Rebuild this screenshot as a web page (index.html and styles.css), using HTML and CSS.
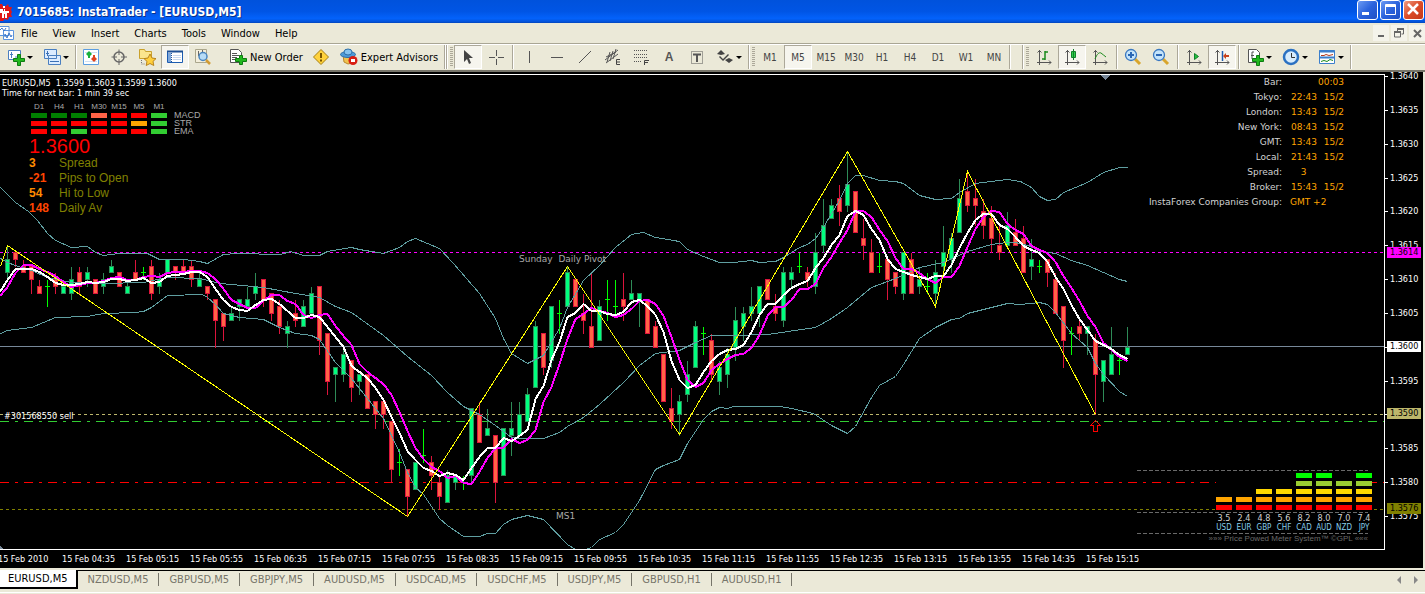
FILE: index.html
```html
<!DOCTYPE html>
<html lang="en">
<head>
<meta charset="utf-8">
<title>7015685: InstaTrader - [EURUSD,M5]</title>
<link rel="stylesheet" href="styles.css">
</head>
<body>
<div class="app">
  <header class="titlebar">
    <svg class="logo" width="12" height="18" viewBox="0 0 12 18"><path fill="#e01818" d="M0 1h2l1 2h3l2-2 1 3 3 0-1 3 1 2-1 2 1 3-3 0-1 3-3-1-2 2H0z"/><path fill="#fff" d="M0 6h3v2h1V6h1v2h4v2H7v5H5v-4H4v4H2v-5H0zM3 3h2v2H3z"/></svg>
    <h1 class="title">7015685: InstaTrader - [EURUSD,M5]</h1>
    <div class="window-buttons">
      <button class="win" aria-label="Minimize"><svg width="20" height="20"><path fill="#fff" d="M5 12h7v3H5z"/></svg></button>
      <button class="win" aria-label="Maximize"><svg width="20" height="20"><path fill="none" stroke="#fff" d="M5.500 4.500h10v10h-10zM5 5.500h11M5 6.500h11"/></svg></button>
      <button class="win win-close" aria-label="Close"><svg width="20" height="20"><path stroke="#fff" stroke-width="2.500" d="M5 4l10 10M15 4L5 14"/></svg></button>
    </div>
  </header>

  <nav class="menubar">
    <svg class="menu-logo" width="15" height="16"><path fill="#fff" stroke="#5b94dd" d="M-1 1.500h10v9H-1zM3.500 5.500h10v9h-10z"/><path fill="none" stroke="#3b78c8" d="M0 5l2-2 2 3 2-3M5 12V9l2 4 2-5 2 4 1-2"/></svg>
    <button class="menu">File</button><button class="menu">View</button><button class="menu">Insert</button><button class="menu">Charts</button><button class="menu">Tools</button><button class="menu">Window</button><button class="menu">Help</button>
    <div class="child-buttons">
      <button class="child" aria-label="Minimize chart"><svg width="16" height="16"><path fill="#666" d="M5 10h6v2H5z"/></svg></button>
      <button class="child" aria-label="Restore chart"><svg width="16" height="16"><path fill="none" stroke="#666" d="M6 4.500h7M6.500 3v3M12.500 3v6h-2M6 3.500h7M3.500 6v6h6V6M3 7.500h7M3 6.500h7"/></svg></button>
      <button class="child" aria-label="Close chart"><svg width="16" height="16"><path stroke="#666" stroke-width="2" d="M5 5l7 7M12 5l-7 7"/></svg></button>
    </div>
  </nav>

  <div class="toolbar">
    <button class="tool tool-drop" aria-label="New chart"><svg width="18" height="18"><path fill="#fff" stroke="#4a7fc0" d="M1.500 2.500h12v9h-12z"/><path fill="none" stroke="#4a7fc0" d="M4.500 4v6M3 6.500h3M8 9h2"/><path fill="#22b81e" stroke="#0c7d10" d="M10.500 6.500h3v4h4v3h-4v4h-3v-4h-4v-3h4z"/></svg><i class="caret"></i></button>
    <button class="tool tool-drop" aria-label="Profiles"><svg width="18" height="18"><path fill="#dcecff" stroke="#4a7fc0" d="M1.500 1.500h12v9h-12zM5.500 7.500h12v9h-12z"/><path fill="none" stroke="#3a70b5" d="M4.500 3v5M3 5.500h3M7 13.500h9"/></svg><i class="caret"></i></button>
    <i class="sep"></i>
    <button class="tool" aria-label="Market watch"><svg width="18" height="18"><path fill="#fff" stroke="#5c9de0" d="M1.500 1.500h15v15h-15z"/><path fill="none" stroke="#cfe0f4" d="M3 13.500h12M3 4.500h12"/><path fill="#19b03a" d="M7 3l3 3-3 3-3-3z"/><path fill="#e0421c" d="M12 8l3 3-3 3-3-3z"/><path fill="#19b03a" d="M6 7h2v3H6z"/><path fill="#e0421c" d="M11 7h2v3h-2z"/></svg></button>
    <button class="tool" aria-label="Data window"><svg width="18" height="18"><circle cx="9" cy="9" r="5" fill="none" stroke="#666" stroke-width="1.500"/><path stroke="#666" d="M9 1.500V7M9 11v6M1.500 9H7M11 9h6"/></svg></button>
    <button class="tool" aria-label="Navigator"><svg width="20" height="18"><path fill="#fbe58d" stroke="#c9a12c" d="M2.500 1.500h5l1 2h6v7h-12z"/><path fill="none" stroke="#777" stroke-dasharray="1 1" d="M4.500 12v4h4"/><path fill="#ffcf3c" stroke="#b8831a" d="M13 6l2 4 4 .6-3 2.800.8 4.100-3.800-2-3.800 2 .8-4.100-3-2.800 4-.6z"/></svg></button>
    <button class="tool pressed" aria-label="Terminal"><svg width="18" height="18"><path fill="#fff" stroke="#1d5cb0" d="M1.500 3.500h15v11h-15z"/><path stroke="#1d4f95" stroke-width="2" d="M1 3.500h16"/><path fill="#7da7dc" d="M2 5h3v9H2z"/><path stroke="#1d4f95" stroke-dasharray="1 1" d="M5.500 5v9"/><path stroke="#c8d8ee" d="M7 7.500h8M7 9.500h8M7 11.500h8"/></svg></button>
    <button class="tool" aria-label="Strategy tester"><svg width="18" height="18"><path fill="#f4efdc" stroke="#aaa68c" d="M1.500 1.500h11v13h-11z"/><path fill="none" stroke="#666" d="M4.500 3v5M8.500 2v6"/><circle cx="9" cy="8.500" r="4" fill="#b7dcf7" stroke="#4b86c0" stroke-width="1.500"/><path stroke="#d19b32" stroke-width="2.500" d="M12 12l4 4"/></svg></button>
    <button class="tool tool-order"><svg width="18" height="18"><path fill="#fff" stroke="#555" d="M1.500 1.500h8l3 3v10h-11z"/><path fill="none" stroke="#555" d="M3 5.500h5M3 7.500h7M3 9.500h5M3 11.500h4"/><path fill="#22b81e" stroke="#0c7d10" d="M10.500 7.500h3v3h4v3h-4v3h-3v-3h-4v-3h4z"/></svg>New Order</button>
    <button class="tool" aria-label="Alerts"><svg width="18" height="18"><path fill="#ffd23c" stroke="#a67e12" d="M9 1.500L16.500 9 9 16.500 1.500 9z"/><path stroke="#7a5600" stroke-width="2" d="M9 5v5M9 11.500v2"/></svg></button>
    <button class="tool tool-expert"><svg width="18" height="18"><path fill="#f0c350" stroke="#b9872b" d="M3 7h11l-2 8-4 1-4-2z"/><ellipse cx="8" cy="6.500" rx="7.500" ry="3" fill="#4d9ad6" stroke="#2d6fa8"/><ellipse cx="8" cy="4" rx="4" ry="3" fill="#86c3ee" stroke="#2d6fa8"/><circle cx="13" cy="12.500" r="4.500" fill="#d81e12"/><path fill="#fff" d="M11 11h4v3h-4z"/></svg>Expert Advisors</button>
    <i class="sep sep-double"></i><i class="grip"></i>
    <button class="tool pressed" aria-label="Cursor"><svg width="18" height="18"><path fill="#444" d="M5 2v12l3-3 2 5 2-1-2-5h4z"/></svg></button>
    <button class="tool" aria-label="Crosshair"><svg width="18" height="18"><path stroke="#555" d="M9.500 2v6M9.500 11v6M2 9.500h6M11 9.500h6"/></svg></button>
    <i class="sep sep-wide"></i>
    <button class="tool" aria-label="Vertical line"><svg width="18" height="18"><path stroke="#555" d="M9.500 3v12"/></svg></button>
    <button class="tool" aria-label="Horizontal line"><svg width="18" height="18"><path stroke="#555" d="M3 9.500h12"/></svg></button>
    <button class="tool" aria-label="Trendline"><svg width="18" height="18"><path stroke="#555" d="M3 15L15 3"/></svg></button>
    <button class="tool" aria-label="Equidistant channel"><svg width="18" height="18"><path fill="none" stroke="#555" d="M1 12L14 2M2 15L14 6M3 14L6 4M6 13L9 3M9 11l3-10M2 9l10-5"/><path fill="none" stroke="#444" d="M16 11.500h-3.500v5H16M13 14h3"/></svg></button>
    <button class="tool" aria-label="Fibonacci"><svg width="18" height="18"><path fill="none" stroke="#555" stroke-dasharray="1 1" d="M2 2.500h14M2 6.500h14M2 9.500h14M2 13.500h8"/><path fill="none" stroke="#444" d="M17 12.500h-4.500V17M13 14.500h3"/></svg></button>
    <button class="tool tool-letter">A</button>
    <button class="tool" aria-label="Text label"><svg width="18" height="18"><path fill="none" stroke="#555" stroke-dasharray="1 1" d="M3.500 3.500h11v12h-11z"/><path stroke="#555" stroke-width="2" d="M5 6.500h8M9 6v8"/></svg></button>
    <button class="tool tool-drop" aria-label="Arrows"><svg width="18" height="18"><path fill="#444" d="M5 2l4 4-4 1-4-1zM13 15l-4-3 4-2 4 2zM4 8l3 3 5-5 1 1-6 6-4-4z"/></svg><i class="caret"></i></button>
    <i class="sep"></i><i class="grip"></i>
    <button class="tool frame">M1</button><button class="tool frame pressed">M5</button><button class="tool frame">M15</button><button class="tool frame">M30</button><button class="tool frame">H1</button><button class="tool frame">H4</button><button class="tool frame">D1</button><button class="tool frame">W1</button><button class="tool frame">MN</button>
    <i class="sep"></i><i class="blank"></i><i class="sep"></i><i class="grip"></i>
    <button class="tool" aria-label="Bar chart"><svg width="18" height="18"><path fill="none" stroke="#555" d="M4.500 2v15M2 14.500h14M2.500 4.500l2-2 2 2M14 12.500l2 2-2 2"/><path fill="none" stroke="#1b8a1b" stroke-width="1.500" d="M10 12V3M10 4h3M7 11h3"/></svg></button>
    <button class="tool pressed" aria-label="Candlesticks"><svg width="18" height="18"><path fill="none" stroke="#555" d="M4.500 2v15M2 14.500h14M2.500 4.500l2-2 2 2M14 12.500l2 2-2 2"/><path fill="#2fd04a" stroke="#12802a" d="M10.500 1v11M8.500 3.500h4v6h-4z"/></svg></button>
    <button class="tool" aria-label="Line chart"><svg width="18" height="18"><path fill="none" stroke="#555" d="M4.500 2v15M2 14.500h14M2.500 4.500l2-2 2 2M14 12.500l2 2-2 2"/><path fill="none" stroke="#1b8a1b" d="M4 11c2-5 4-7 6-6s3 3 5 4"/></svg></button>
    <i class="sep sep-wide"></i>
    <button class="tool" aria-label="Zoom in"><svg width="18" height="18"><path stroke="#d8a52c" stroke-width="3" d="M11 11l5 5"/><circle cx="7" cy="7" r="5.500" fill="#c4e4fa" stroke="#3a78c0" stroke-width="1.300"/><path stroke="#2a67b5" stroke-width="2" d="M4 7h6M7 4v6"/></svg></button>
    <button class="tool" aria-label="Zoom out"><svg width="18" height="18"><path stroke="#d8a52c" stroke-width="3" d="M11 11l5 5"/><circle cx="7" cy="7" r="5.500" fill="#c4e4fa" stroke="#3a78c0" stroke-width="1.300"/><path stroke="#2a67b5" stroke-width="2" d="M4 7h6"/></svg></button>
    <i class="sep sep-wide"></i>
    <button class="tool" aria-label="Auto scroll"><svg width="18" height="18"><path fill="none" stroke="#555" d="M4.500 2v15M2 14.500h14M2.500 4.500l2-2 2 2M14 12.500l2 2-2 2"/><path fill="#23c13c" stroke="#12802a" d="M9.500 5.500l4 3-4 3z"/></svg></button>
    <button class="tool pressed" aria-label="Chart shift"><svg width="18" height="18"><path fill="none" stroke="#555" d="M4.500 2v15M2 14.500h14M2.500 4.500l2-2 2 2M14 12.500l2 2-2 2"/><path stroke="#1d5cb0" stroke-width="1.500" d="M9.500 3v10"/><path fill="#c8421c" d="M10 8l3-3v2h3v2h-3v2z"/></svg></button>
    <i class="sep sep-wide"></i>
    <button class="tool tool-drop" aria-label="Indicators"><svg width="18" height="18"><path fill="#fff" stroke="#555" d="M2.500 1.500h8l3 3v10h-11z"/><path fill="none" stroke="#555" d="M8 4H6v7M5 7.500h3"/><path fill="#22b81e" stroke="#0c7d10" d="M10.500 7.500h3v3h4v3h-4v4h-3v-4h-4v-3h4z"/></svg><i class="caret"></i></button>
    <button class="tool tool-drop" aria-label="Periods"><svg width="18" height="18"><circle cx="9" cy="9" r="7" fill="#d8ecfc" stroke="#2b71c2" stroke-width="2.500"/><path fill="none" stroke="#333" d="M9.500 5v4.500H13"/></svg><i class="caret"></i></button>
    <button class="tool tool-drop" aria-label="Templates"><svg width="18" height="18"><path fill="#fff" stroke="#3b7fcc" d="M1.500 2.500h15v13h-15z"/><path stroke="#3b7fcc" stroke-width="2" d="M1 3.500h16M1 9.500h16"/><path fill="none" stroke="#b2391c" d="M3 7.500h3l2-1 3 1 4-1"/><path fill="none" stroke="#1b8a1b" d="M3 13.500l3-1 3 1 3-2 3 1"/></svg><i class="caret"></i></button>
    <i class="sep"></i>
  </div>

  <main class="chart">
    <div class="plot">
      <svg class="canvas" id="canvas" width="100%" height="478" role="img" aria-label="EURUSD five minute candlestick chart"></svg>

      <section class="summary">
        <p class="quote">EURUSD,M5 &nbsp;1.3599 1.3603 1.3599 1.3600<br>Time for next bar: 1 min 39 sec</p>
        <table class="signals">
          <thead><tr><th>D1</th><th>H4</th><th>H1</th><th>M30</th><th>M15</th><th>M5</th><th>M1</th><td></td></tr></thead>
          <tbody>
            <tr><td class="up"></td><td class="up"></td><td class="up"></td><td class="weak"></td><td class="down"></td><td class="down"></td><td class="rise"></td><th>MACD</th></tr>
            <tr><td class="down"></td><td class="down"></td><td class="down"></td><td class="down"></td><td class="down"></td><td class="flat"></td><td class="rise"></td><th>STR</th></tr>
            <tr><td class="down"></td><td class="down"></td><td class="rise"></td><td class="down"></td><td class="down"></td><td class="down"></td><td class="rise"></td><th>EMA</th></tr>
          </tbody>
        </table>
        <p class="price">1.3600</p>
        <dl class="stats">
          <dt class="mild">3</dt><dd>Spread</dd>
          <dt class="hot">-21</dt><dd>Pips to Open</dd>
          <dt class="mild">54</dt><dd>Hi to Low</dd>
          <dt class="hot">148</dt><dd>Daily Av</dd>
        </dl>
      </section>

      <table class="clocks">
        <tbody>
          <tr><th>Bar:</th><td></td><td class="late">00:03</td></tr>
          <tr><th>Tokyo:</th><td>22:43</td><td>15/2</td></tr>
          <tr><th>London:</th><td>13:43</td><td>15/2</td></tr>
          <tr><th>New York:</th><td>08:43</td><td>15/2</td></tr>
          <tr><th>GMT:</th><td>13:43</td><td>15/2</td></tr>
          <tr><th>Local:</th><td>21:43</td><td>15/2</td></tr>
          <tr><th>Spread:</th><td class="inset">3</td><td></td></tr>
          <tr><th>Broker:</th><td>15:43</td><td>15/2</td></tr>
          <tr><th>InstaForex Companies Group:</th><td colspan="2">GMT +2</td></tr>
        </tbody>
      </table>

      <section class="meter">
        <div class="bars" id="bars"></div>
        <div class="readings" id="readings"></div>
        <p class="credit">»»» Price Powed Meter System™ ©GPL «««</p>
      </section>
    </div>

    <aside class="scale">
      <ol class="prices">
        <li>1.3640</li><li>1.3635</li><li>1.3630</li><li>1.3625</li><li>1.3620</li><li>1.3615</li><li>1.3610</li><li>1.3605</li><li>1.3600</li><li>1.3595</li><li>1.3590</li><li>1.3585</li><li>1.3580</li><li>1.3575</li>
      </ol>
      <span class="tag tag-pivot">1.3614</span>
      <span class="tag tag-bid">1.3600</span>
      <span class="tag tag-order">1.3590</span>
      <span class="tag tag-support">1.3576</span>
    </aside>

    <ol class="times">
      <li>15 Feb 2010</li><li>15 Feb 04:35</li><li>15 Feb 05:15</li><li>15 Feb 05:55</li><li>15 Feb 06:35</li><li>15 Feb 07:15</li><li>15 Feb 07:55</li><li>15 Feb 08:35</li><li>15 Feb 09:15</li><li>15 Feb 09:55</li><li>15 Feb 10:35</li><li>15 Feb 11:15</li><li>15 Feb 11:55</li><li>15 Feb 12:35</li><li>15 Feb 13:15</li><li>15 Feb 13:55</li><li>15 Feb 14:35</li><li>15 Feb 15:15</li>
    </ol>
  </main>

  <footer class="tabs">
    <button class="tab tab-active">EURUSD,M5</button><button class="tab">NZDUSD,M5</button><button class="tab">GBPUSD,M5</button><button class="tab">GBPJPY,M5</button><button class="tab">AUDUSD,M5</button><button class="tab">USDCAD,M5</button><button class="tab">USDCHF,M5</button><button class="tab">USDJPY,M5</button><button class="tab">GBPUSD,H1</button><button class="tab">AUDUSD,H1</button>
    <div class="tab-scroll">
      <button class="arrow" aria-label="Scroll tabs left"><svg width="5" height="8"><path fill="#888" d="M4 0v8L0 4z"/></svg></button>
      <button class="arrow" aria-label="Scroll tabs right"><svg width="5" height="8"><path fill="#888" d="M0 0v8l4-4z"/></svg></button>
    </div>
  </footer>
</div>
<script src="chart.js"></script>
</body>
</html>
```
FILE: styles.css
```css
* { box-sizing: border-box; }

body {
  margin: 0;
  background: #ebe9d8;
  color: #000;
  font: 11px/13px "DejaVu Sans Condensed", "Liberation Sans", sans-serif;
}

button {
  margin: 0;
  padding: 0;
  border: 0;
  background: none;
  color: inherit;
  font: inherit;
}

h1, p, dl, dd, ol { margin: 0; padding: 0; }
ol { list-style: none; }
svg { display: block; flex: none; }

.app {
  display: flex;
  flex-direction: column;
  min-height: 100vh;
  overflow: hidden;
}

/* Title bar */
.titlebar {
  display: flex;
  align-items: center;
  height: 23px;
  background: linear-gradient(#0052dc, #0055e5 50%, #0362fb 80%, #0352d8 95%, #0244b8);
}
.title {
  flex: 1;
  padding-left: 5px;
  color: #fff;
  font: bold 12px/20px "DejaVu Sans Condensed", sans-serif;
  text-shadow: 1px 1px 0 #0a2f86;
}
.window-buttons { display: flex; gap: 2px; padding: 0 1px 3px 0; }
.win {
  width: 21px;
  height: 20px;
  border: 1px solid #fff;
  border-radius: 3px;
  background: linear-gradient(135deg, #6c9bf3, #2a63dd 50%, #1f50c4);
}
.win svg { margin: -1px; }
.win-close { background: linear-gradient(135deg, #ee9a80, #dc4c28 50%, #c3391a); }

/* Menu */
.menubar {
  display: flex;
  align-items: center;
  height: 20px;
  font-size: 11px;
}
.menu-logo { margin-right: 6px; }
.menu { margin-right: 15px; }
.child-buttons { display: flex; gap: 2px; margin-left: auto; }
.child { width: 16px; height: 16px; background: #f4f3ea; }

/* Toolbar */
.toolbar {
  display: flex;
  align-items: center;
  height: 29px;
  padding-left: 2px;
  border-top: 1px solid #a9a694;
  border-bottom: 2px solid #77756a;
  box-shadow: inset 0 1px #fff;
}
.tool {
  display: flex;
  flex: none;
  align-items: center;
  justify-content: center;
  width: 28px;
  height: 24px;
}
.pressed {
  border: 1px solid #aca899;
  border-right-color: #fff;
  border-bottom-color: #fff;
  background: #f6f5ee;
  background-clip: padding-box;
}
.tool-drop { width: 36px; gap: 2px; }
.tool-order { width: 90px; gap: 3px; padding-left: 8px; }
.tool-expert { width: 108px; gap: 3px; }
.tool-letter { color: #555; font: bold 12px/14px "Liberation Sans", sans-serif; }
.frame { color: #444; font-size: 10px; }
.caret {
  border: 3px solid transparent;
  border-top-color: #000;
  border-bottom: 0;
}
.sep {
  flex: none;
  width: 1px;
  height: 24px;
  margin: 0 1px;
  background: #aca899;
  box-shadow: 1px 0 #fff;
}
.sep-double { width: 3px; border-left: 1px solid #aca899; border-right: 1px solid #aca899; background: #fff; }
.sep-wide { margin: 0 2px; }
.blank { flex: none; width: 10px; }
.grip {
  flex: none;
  width: 3px;
  height: 20px;
  margin: 0 1px 0 2px;
  background: repeating-linear-gradient(#aca899 0 1px, #ebe9d8 1px 2px);
}

/* Chart */
.chart {
  display: grid;
  grid-template: 478px 18px / 1fr 38px;
  margin-right: 2px;
  background: #000;
  color: #fff;
  font-size: 9px;
  line-height: 10px;
}
.plot {
  position: relative;
  min-width: 0;
  overflow: hidden;
}
.canvas { shape-rendering: crispEdges; }
.canvas text { font: 9px "DejaVu Sans", sans-serif; fill: #a9a9a9; }
.canvas .order { font-family: "DejaVu Sans Condensed", sans-serif; fill: #fff; }
.axis { fill: none; stroke: #fff; }
.band { fill: none; stroke: #5f9ea0; }
.zigzag { fill: none; stroke: #ff0; }
.fast, .slow { fill: none; stroke-width: 2; }
.fast { stroke: #fff; }
.slow { stroke: #f0f; }
.bull { fill: #00ff7f; stroke: #2e8b57; }
.bear { fill: #ff6347; stroke: #dc143c; }
.doji { fill: none; stroke: #0f0; }
.level { stroke-dasharray: 3 3; }
.dashdot { stroke-dasharray: 9 6 3 6; }
.pivot { stroke: #f0f; }
.open-order { stroke: #bdb76b; }
.limit { stroke: #32cd32; }
.stop { stroke: #f00; }
.support { stroke: #808000; }
.last { stroke: #778899; }
.marker { fill: #778899; }
.signal { fill: none; stroke: #f00; }

.summary { position: absolute; left: 2px; top: 6px; }
.signals { margin: 3px 0 0 26px; border-collapse: separate; border-spacing: 2px 1px; }
.signals th, .signals td { padding: 0; }
.signals thead th { width: 18px; max-width: 18px; color: #a9a9a9; font: 8px/9px "Liberation Sans", sans-serif; white-space: nowrap; }
.signals tbody td { height: 7px; border: solid #000; border-width: 1px; }
.signals tbody th { padding-left: 4px; color: #a9a9a9; font: 9px/7px "Liberation Sans", sans-serif; text-align: left; }
.up { background: #008000; }
.down { background: #f00; }
.weak { background: #ff6347; }
.flat { background: #ffa500; }
.rise { background: #32cd32; }
.price { padding-left: 27px; color: #f00; font: 20px/20px "Liberation Sans", sans-serif; }
.stats {
  display: grid;
  grid-template-columns: 30px auto;
  padding-left: 27px;
  font: 12px/15px "Liberation Sans", sans-serif;
}
.stats dt { font-weight: bold; }
.stats dd { color: #808000; }
.mild { color: #ff8c00; }
.hot { color: #ff4500; }

.clocks {
  position: absolute;
  top: 3px;
  right: 41px;
  border-collapse: collapse;
  font: 9px/15px "DejaVu Sans", sans-serif;
}
.clocks th, .clocks td { padding: 0; }
.clocks th { padding-right: 8px; color: #d3d3d3; font-weight: normal; text-align: right; }
.clocks td { min-width: 27px; color: #ffa500; text-align: right; }
.clocks td[colspan] { text-align: left; }
.clocks .inset { text-align: center; }

.meter {
  position: absolute;
  right: 13px;
  top: 398px;
  padding-left: 79px;
  background:
    repeating-linear-gradient(90deg, #696969 0 4px, transparent 4px 6px) 0 0 / 231px 1px no-repeat,
    repeating-linear-gradient(90deg, #696969 0 4px, transparent 4px 6px) 0 42px / 231px 1px no-repeat,
    repeating-linear-gradient(90deg, #696969 0 4px, transparent 4px 6px) 0 63px / 231px 1px no-repeat;
}
.bars, .readings { display: flex; gap: 4px; }
.bars { height: 41px; margin: 1px 0; padding-bottom: 2px; background: #000; }
.bar { display: flex; flex-direction: column-reverse; gap: 3px; width: 16px; }
.bar i { height: 5px; }
.bar i:nth-child(1) { background: #f00; }
.bar i:nth-child(2) { background: #ffa500; }
.bar i:nth-child(3) { background: #ffd700; }
.bar i:nth-child(4) { background: #9acd32; }
.bar i:nth-child(5) { background: #0f0; }
.readings { height: 20px; color: #d3d3d3; font-size: 9px; line-height: 11px; }
.reading { width: 16px; text-align: center; }
.reading span { display: block; }
.reading .code { margin: 0 -2px; color: #87ceeb; font: 8px/8px "DejaVu Sans Condensed", sans-serif; }
.credit { margin-left: -79px; padding: 1px 4px 0 0; color: #696969; font: 8px/10px "Liberation Sans", sans-serif; white-space: nowrap; text-align: right; }

.scale { position: relative; }
.prices {
  display: flex;
  flex-direction: column;
  justify-content: space-between;
  height: 448px;
}
.prices li { height: 8px; padding-left: 5px; line-height: 8px; background: linear-gradient(#fff 0 0) 0 4px / 3px 1px no-repeat; }
.tag {
  position: absolute;
  left: 2px;
  width: 34px;
  padding-left: 3px;
  line-height: 11px;
  color: #000;
}
.tag-pivot { top: 175px; background: #f0f; }
.tag-bid { top: 269px; background: #fff; }
.tag-order { top: 336px; background: #bdb76b; }
.tag-support { top: 431px; background: #808000; }

.times {
  display: flex;
  grid-column: 1 / -1;
  overflow: hidden;
  line-height: 19px;
}
.times li { flex: none; width: 64px; white-space: nowrap; }
.times li:first-child { width: 62px; text-indent: -2px; }

/* Tabs */
.tabs {
  display: flex;
  align-items: flex-start;
  height: 23px;
  margin-top: 2px;
  border-bottom: 1px solid #fff;
  box-shadow: inset 0 1px #000;
  color: #77756a;
}
.tab {
  position: relative;
  height: 19px;
  padding: 0 11px 0 10px;
  font-size: 11px;
}
.tab:not(.tab-active)::after {
  content: "";
  position: absolute;
  top: 3px;
  right: 0;
  width: 1px;
  height: 13px;
  background: #77756a;
}
.tab-active {
  padding: 0 8px;
  border: solid #000;
  border-width: 0 2px 2px 0;
  background: #fff;
  color: #000;
}
.tab-scroll { display: flex; gap: 12px; margin-left: auto; padding: 6px 6px 0 0; }
```
FILE: chart.js
```js
const NS = "http://www.w3.org/2000/svg";
const STEP = 8;
const OFFSET = 7.5;
const ORIGIN = 72;

// Pips above 1.3500: open, high, low, close. One row per five minutes.
const candles = [
  [111,115,110,113],[114,114,112,113],[112,113,111,111],[112,112,108,110],[109,110,108,108],[109,110,106,109],[110,111,108,109],[108,109,108,109],
  [108,112,107,110],[111,112,108,109],[110,112,109,111],[110,110,108,108],[109,111,108,110],[111,113,111,112],[111,111,109,109],[108,110,108,109],
  [111,113,110,110],[111,112,110,111],[112,113,107,108],[109,111,108,110],[111,113,111,113],[112,112,110,111],[112,113,111,111],[112,113,109,110],
  [109,111,109,110],[109,109,107,108],[107,107,100,104],[105,105,101,103],[104,106,104,105],[106,107,104,107],[106,109,106,107],[108,111,107,109],
  [110,110,106,107],[108,108,104,105],[106,107,102,103],[102,104,100,103],[105,107,103,104],[103,107,103,106],[105,109,105,108],[109,109,99,101],
  [102,102,93,95],[96,97,92,97],[96,100,95,99],[98,98,92,94],[95,96,93,96],[96,96,91,91],[92,92,88,90],[92,92,88,90],
  [89,89,80,82],[83,85,81,83],[82,82,75,78],[79,83,79,83],[84,88,83,84],[83,84,79,81],[80,81,76,78],[77,82,77,81],
  [80,81,79,81],[80,81,79,80],[81,91,80,91],[90,92,86,86],[87,91,87,88],[87,87,77,80],[81,88,81,88],[87,92,84,88],
  [87,92,87,90],[89,94,89,93],[94,104,94,103],[102,102,96,97],[98,106,97,106],[105,107,102,105],[106,112,106,111],[110,110,106,106],
  [105,108,102,104],[103,111,100,100],[101,107,101,106],[107,110,104,107],[106,110,105,106],[107,111,104,106],[107,110,107,108],[107,108,103,108],
  [107,107,102,102],[103,104,100,100],[99,99,92,92],[91,94,88,89],[90,93,87,92],[93,98,92,96],[97,104,97,103],[102,103,99,102],
  [101,102,95,96],[95,98,93,97],[96,100,94,99],[100,106,98,104],[103,106,101,105],[105,109,104,106],[105,109,103,109],[110,110,107,107],
  [106,108,104,105],[104,112,103,111],[110,112,109,111],[112,114,111,112],[111,112,109,110],[109,117,108,114],[115,122,114,118],[119,122,119,121],
  [122,124,118,120],[121,129,120,124],[123,123,117,117],[116,119,113,115],[114,116,111,111],[112,114,111,112],[113,113,107,110],[111,111,108,109],
  [108,114,107,114],[113,114,108,108],[109,112,108,110],[109,111,108,109],[108,113,106,111],[112,118,111,114],[113,117,111,116],[117,125,117,122],
  [123,126,120,121],[122,125,118,121],[120,122,116,118],[119,121,114,116],[115,118,113,114],[115,120,115,118],[117,119,115,115],[116,118,111,111],
  [112,116,110,113],[112,113,111,112],[113,113,109,111],[110,111,105,105],[106,106,97,101],[102,103,99,102],[103,104,101,102],[102,103,99,103],
  [101,102,90,96],[95,98,92,98],[96,103,96,99],[98,99,96,98],[99,103,99,100]
];

// Moving averages, one plotted height per candle.
const fast = [280,269,269,269,272,277,283,285,285,284,282,283,282,279,279,281,280,278,283,282,276,275,274,272,272,277,289,300,307,310,311,305,300,299,304,311,318,
  318,315,317,327,337,347,366,372,378,388,400,417,433,451,460,468,471,476,473,475,480,468,457,448,448,438,441,436,430,399,386,360,342,317,
  313,304,311,311,314,315,312,302,300,306,315,332,361,380,388,385,372,361,354,350,349,345,332,315,304,304,
  295,288,284,281,268,258,245,235,216,211,215,229,240,259,269,272,275,277,279,276,276,265,248,233,220,214,214,225,229,
  237,246,250,253,262,277,289,305,319,330,341,345,349,355,359];
const slow = [287,273,265,265,269,272,276,282,287,285,283,283,281,278,277,280,280,277,276,277,273,272,272,271,271,273,279,289,300,304,308,308,301,295,295,301,304,
  315,318,315,314,326,336,345,364,372,378,384,395,412,431,448,459,467,471,478,476,483,484,472,458,448,448,439,443,440,430,402,387,364,339,
  319,314,308,311,313,317,315,309,301,300,304,316,337,360,380,387,383,370,364,359,355,354,348,335,316,307,
  307,300,289,289,284,268,257,243,230,211,211,217,230,241,258,269,269,273,279,283,277,277,266,247,229,217,211,212,224,
  230,234,246,250,253,262,276,288,301,316,327,343,350,357,361];

const bands = [
  "0,187 15,202 28,211 37,220 47,233 55,240 71,247 87,246 95,252 103,255 119,253 147,253 159,259 183,259 199,261 207,263 223,254 237,253 280,254 290,251 303,255 319,255 327,251 351,247 359,249 383,253 399,247 407,241 415,238 439,248 453,263 479,293 495,318 503,338 511,353 527,363 543,355 559,328 567,307 583,280 599,265 615,247 631,234 643,232 655,237 679,241 687,249 703,256 719,262 733,262 751,260 759,262 775,261 783,257 799,247 807,244 815,238 823,227 831,213 839,200 847,183 855,175 863,175 879,180 895,181 903,183 919,195 935,199 951,198 959,192 975,183 991,181 1007,179 1020,181 1031,187 1039,196 1047,200 1055,199 1063,192 1087,182 1103,172 1119,167 1127,167",
  "0,258 7,262 15,265 31,270 47,277 71,282 103,283 143,282 167,277 199,278 220,283 231,284 263,287 295,293 319,297 335,306 351,312 383,335 407,356 431,375 447,392 463,406 479,414 495,425 511,437 519,438 543,438 559,432 567,426 583,417 599,404 623,382 639,365 655,353 679,350 695,342 711,335 733,335 767,334 815,327 831,318 847,307 871,287 895,278 919,267 943,262 967,251 991,244 1007,242 1015,242 1031,246 1039,251 1055,253 1071,260 1087,265 1103,272 1119,279 1127,281",
  "0,333 7,330 31,327 55,317 87,316 103,313 135,312 143,311 151,307 159,301 167,295 202,294 207,297 215,304 223,313 239,317 263,319 279,327 287,330 295,333 311,335 319,339 335,362 351,378 367,398 383,418 399,452 407,472 415,487 423,494 439,518 447,525 463,536 479,536 487,533 495,533 503,524 511,519 527,515 543,519 567,544 575,549 583,550 591,547 599,539 615,532 623,524 639,500 655,469 663,465 679,459 687,443 703,419 711,411 719,407 727,408 733,406 780,406 791,408 813,413 831,425 847,433 855,426 871,397 879,385 895,376 903,364 919,338 935,327 951,319 959,318 967,313 991,307 1007,303 1020,304 1039,302 1047,304 1055,312 1071,333 1087,347 1095,363 1103,374 1119,391 1127,396"
];
const zigzag = "0,266 7,245 407,516 567,266 679,434 847,151 935,306 967,171 1095,414";

const canvas = document.getElementById("canvas");
const layer = document.createElementNS(NS, "g");
layer.setAttribute("transform", `translate(0 ${-ORIGIN})`);
canvas.append(layer);

function draw(name, attrs, text) {
  const node = document.createElementNS(NS, name);
  for (const key in attrs) node.setAttribute(key, attrs[key]);
  if (text) node.textContent = text;
  layer.append(node);
}
const yOf = pips => Math.round(76 + (140 - pips) * 6.769) + 0.5;

function level(y, cls) {
  draw("line", { x1: 0, x2: "100%", y1: y + 0.5, y2: y + 0.5, class: cls });
}
level(346, "last");
level(252, "level pivot");
level(414, "level open-order");
level(421, "dashdot limit");
level(482, "dashdot stop");
level(509, "level support");

candles.forEach(([open, high, low, close], i) => {
  const x = OFFSET + i * STEP;
  const cls = open === close ? "doji" : close > open ? "bull" : "bear";
  draw("path", { class: cls, d: `M${x} ${yOf(high)}V${yOf(low)}` });
  if (open === close) {
    draw("path", { class: cls, d: `M${x - 2.5} ${yOf(open)}h5` });
  } else {
    const top = yOf(Math.max(open, close));
    draw("rect", { class: cls, x: x - 2, y: top, width: 4, height: yOf(Math.min(open, close)) - top });
  }
});

bands.forEach(points => draw("polyline", { class: "band", points, transform: "translate(.5 .5)" }));
const average = (start, values) => `0,${start} ` + values.map((y, i) => `${OFFSET + i * STEP},${y}`).join(" ");
draw("polyline", { class: "slow", points: average(296, slow) });
draw("polyline", { class: "fast", points: average(292, fast) });
draw("polyline", { class: "zigzag", points: zigzag, transform: "translate(.5 .5)" });

draw("path", { class: "signal", d: "M1095.500 420.500l5 5h-3v6h-4v-6h-3z" });
draw("path", { class: "marker", d: "M1101 75h9l-4.500 5zM0 546l4 4H0z" });
draw("text", { x: 519, y: 262 }, "Sunday\u00a0 Daily Pivot");
draw("text", { x: 556, y: 519 }, "MS1");
draw("text", { x: 4, y: 419, class: "order" }, "#301568550 sell");

draw("line", { class: "axis", x1: 0, x2: "100%", y1: 74.5, y2: 74.5 });
draw("line", { class: "axis", x1: "100%", x2: "100%", y1: 74, y2: 550, transform: "translate(-.5 0)" });
draw("line", { class: "axis", x1: 0, x2: "100%", y1: 549.5, y2: 549.5 });

// Currency strength meter
const strengths = [["USD", "3.5", 2], ["EUR", "2.4", 2], ["GBP", "4.8", 3], ["CHF", "5.6", 3], ["CAD", "8.2", 5], ["AUD", "8.0", 5], ["NZD", "7.0", 4], ["JPY", "7.4", 5]];
document.getElementById("bars").innerHTML = strengths.map(s => `<div class="bar">${"<i></i>".repeat(s[2])}</div>`).join("");
document.getElementById("readings").innerHTML = strengths.map(s => `<div class="reading"><span>${s[1]}</span><span class="code">${s[0]}</span></div>`).join("");
```
